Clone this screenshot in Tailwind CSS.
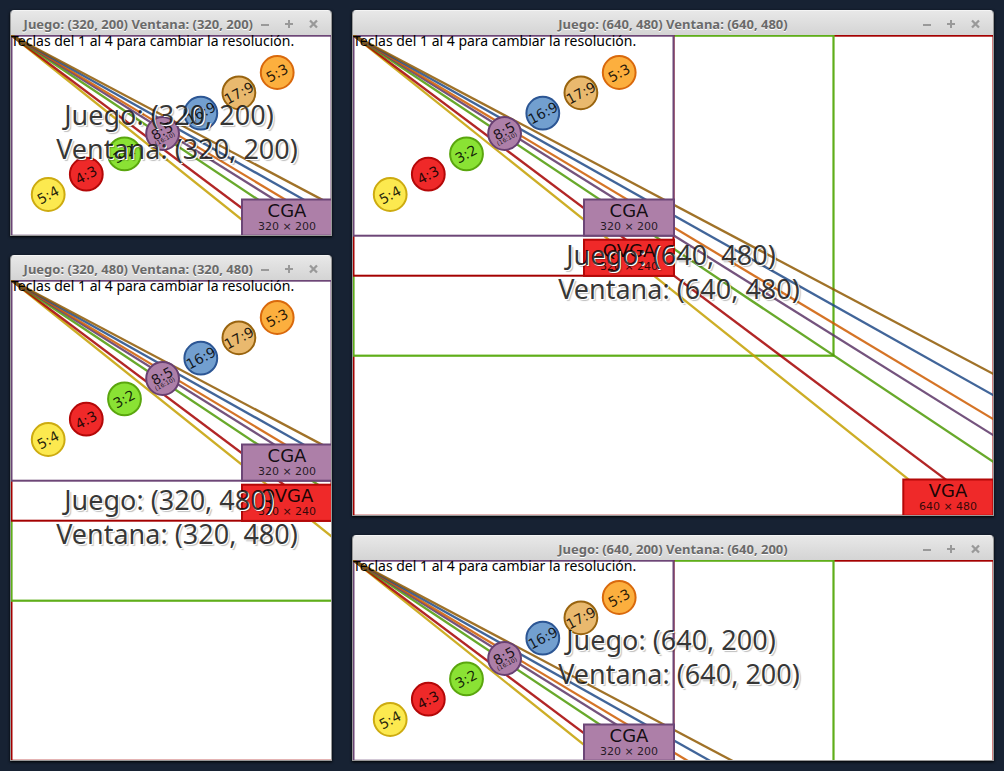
<!DOCTYPE html>
<html lang="es">
<head>
<meta charset="utf-8">
<meta name="viewport" content="width=device-width, initial-scale=1">
<title>Resoluciones</title>
<script src="https://cdn.jsdelivr.net/npm/@tailwindcss/browser@4"></script>
</head>
<body class="min-h-screen bg-[#172233] font-['Noto_Sans',sans-serif]">

<!-- Shared drawing: resolution frames and aspect-ratio lines, shown by every window -->
<svg class="absolute size-0" aria-hidden="true">
  <defs>
    <g id="scene" font-family="DejaVu Sans, sans-serif" text-anchor="middle" fill="none">
      <rect x="0.5" y="0.7" width="640" height="480" stroke="#a40000" stroke-width="2"/>
      <rect x="0.5" y="0.7" width="480" height="320" fill="#fff" stroke="#5fae1a" stroke-width="2.2"/>
      <rect x="0.5" y="0.7" width="320" height="240" fill="#fff" stroke="#a40000" stroke-width="2"/>
      <rect x="0.5" y="0.7" width="320" height="200" fill="#fff" stroke="#6d4677" stroke-width="2"/>
      <g stroke-width="2.3" stroke-opacity="0.85">
        <path d="M0 0L800 640" stroke="#c4a000"/>
        <path d="M0 0L800 600" stroke="#a40000"/>
        <path d="M0 0L900 600" stroke="#4e9a06"/>
        <path d="M0 0L800 500" stroke="#5c3566"/>
        <path d="M0 0L800 480" stroke="#ce5c00"/>
        <path d="M0 0L800 450" stroke="#204a87"/>
        <path d="M0 0L850 450" stroke="#8f5902"/>
      </g>
      <g stroke-width="2">
        <rect x="231" y="164.5" width="90" height="36.2" fill="#ad7fa8" stroke="#6d4677"/>
        <rect x="231" y="204.7" width="90" height="36.2" fill="#ef2929" stroke="#b40808"/>
        <rect x="550.3" y="444.5" width="90" height="36.2" fill="#ef2929" stroke="#b40808"/>
      </g>
      <g fill="#000" fill-opacity="0.9" font-size="18">
        <text x="276" y="182">CGA</text>
        <text x="276" y="222">QVGA</text>
        <text x="595" y="462">VGA</text>
      </g>
      <g fill="#000" fill-opacity="0.8" font-size="11">
        <text x="276" y="195">320 × 200</text>
        <text x="276" y="235">320 × 240</text>
        <text x="595" y="475">640 × 480</text>
      </g>
      <g stroke-width="2">
        <circle cx="37.2" cy="159.5" r="16.4" fill="#fce94f" stroke="#cdab10"/>
        <circle cx="75.3" cy="139.2" r="16.4" fill="#ef2929" stroke="#b40808"/>
        <circle cx="113.5" cy="118.9" r="16.4" fill="#8ae234" stroke="#5aa60e"/>
        <circle cx="151.6" cy="98.5" r="16.4" fill="#ad7fa8" stroke="#684072"/>
        <circle cx="189.8" cy="78.2" r="16.4" fill="#729fcf" stroke="#2c5694"/>
        <circle cx="227.9" cy="57.8" r="16.4" fill="#e9b96e" stroke="#99640f"/>
        <circle cx="266.2" cy="37.5" r="16.4" fill="#fcaf3e" stroke="#d9690c"/>
      </g>
      <g fill="#000" fill-opacity="0.85" font-size="14">
        <text transform="translate(37 160) rotate(-28)" y="5">5:4</text>
        <text transform="translate(75 140) rotate(-28)" y="5">4:3</text>
        <text transform="translate(113 119) rotate(-28)" y="5">3:2</text>
        <text transform="translate(151 96) rotate(-28)" y="5">8:5</text>
        <text transform="translate(190 78) rotate(-28)" y="5">16:9</text>
        <text transform="translate(228 58) rotate(-28)" y="5">17:9</text>
        <text transform="translate(266 38) rotate(-28)" y="5">5:3</text>
        <text transform="translate(154 104) rotate(-28)" y="2" font-size="6">(16:10)</text>
      </g>
    </g>
    <g id="minimize"><path d="M4 8h8v2H4z"/></g>
    <g id="maximize"><path d="M4 7h3V4h2v3h3v2H9v3H7V9H4z"/></g>
    <g id="close"><path d="M5 4.500L12 11.500M12 4.500L5 11.500" stroke="#999" stroke-width="2.300"/></g>
  </defs>
</svg>

<main class="grid grid-cols-[322fr_642fr] items-start gap-5 p-[10px]">
  <div class="flex min-w-0 flex-col gap-[19px]">

    <section class="overflow-hidden rounded-t border border-t-0 border-[#999] shadow-[0_1px_3px_#000]">
      <header class="grid h-[25px] grid-cols-[minmax(0,1fr)_auto_1fr] items-center border-t border-[#f4f4f4] bg-linear-to-b from-[#e8e8e8] to-[#d4d4d4] pt-px">
        <h2 class="col-start-2 whitespace-nowrap text-[13px] leading-6 font-bold text-[#6a6a6a] text-shadow-[0_1px_0_#fff]">Juego: (320, 200) Ventana: (320, 200)</h2>
        <div class="flex justify-end pr-[6px]">
          <button class="grid h-6 w-6 place-items-center" aria-label="Minimizar"><svg class="size-4 fill-[#999]" viewBox="0 0 16 16"><use href="#minimize"/></svg></button>
          <button class="grid h-6 w-6 place-items-center" aria-label="Maximizar"><svg class="size-4 fill-[#999]" viewBox="0 0 16 16"><use href="#maximize"/></svg></button>
          <button class="grid h-6 w-6 place-items-center" aria-label="Cerrar"><svg class="size-4 fill-[#999]" viewBox="0 0 16 16"><use href="#close"/></svg></button>
        </div>
      </header>
      <div class="relative h-[200px] overflow-hidden bg-white">
        <svg class="absolute inset-0 size-full"><use href="#scene"/></svg>
        <p class="absolute top-0 left-0 whitespace-nowrap text-[14px] leading-3 text-black">Teclas del 1 al 4 para cambiar la resolución.</p>
        <div class="absolute inset-0 grid place-content-center pb-1.5 pl-3 whitespace-nowrap text-[27px] leading-[34px] text-black/80 text-shadow-[1px_1px_0_#fff,2px_2px_1px_#00000040]">
          <p class="pl-2">Juego: (320, 200)</p>
          <p>Ventana: (320, 200)</p>
        </div>
      </div>
    </section>

    <section class="overflow-hidden rounded-t border border-t-0 border-[#999] shadow-[0_1px_3px_#000]">
      <header class="grid h-[25px] grid-cols-[minmax(0,1fr)_auto_1fr] items-center border-t border-[#f4f4f4] bg-linear-to-b from-[#e8e8e8] to-[#d4d4d4] pt-px">
        <h2 class="col-start-2 whitespace-nowrap text-[13px] leading-6 font-bold text-[#6a6a6a] text-shadow-[0_1px_0_#fff]">Juego: (320, 480) Ventana: (320, 480)</h2>
        <div class="flex justify-end pr-[6px]">
          <button class="grid h-6 w-6 place-items-center" aria-label="Minimizar"><svg class="size-4 fill-[#999]" viewBox="0 0 16 16"><use href="#minimize"/></svg></button>
          <button class="grid h-6 w-6 place-items-center" aria-label="Maximizar"><svg class="size-4 fill-[#999]" viewBox="0 0 16 16"><use href="#maximize"/></svg></button>
          <button class="grid h-6 w-6 place-items-center" aria-label="Cerrar"><svg class="size-4 fill-[#999]" viewBox="0 0 16 16"><use href="#close"/></svg></button>
        </div>
      </header>
      <div class="relative h-[480px] overflow-hidden bg-white">
        <svg class="absolute inset-0 size-full"><use href="#scene"/></svg>
        <p class="absolute top-0 left-0 whitespace-nowrap text-[14px] leading-3 text-black">Teclas del 1 al 4 para cambiar la resolución.</p>
        <div class="absolute inset-0 grid place-content-center pb-1.5 pl-3 whitespace-nowrap text-[27px] leading-[34px] text-black/80 text-shadow-[1px_1px_0_#fff,2px_2px_1px_#00000040]">
          <p class="pl-2">Juego: (320, 480)</p>
          <p>Ventana: (320, 480)</p>
        </div>
      </div>
    </section>
  </div>

  <div class="flex min-w-0 flex-col gap-[19px]">

    <section class="overflow-hidden rounded-t border border-t-0 border-[#999] shadow-[0_1px_3px_#000]">
      <header class="grid h-[25px] grid-cols-[minmax(0,1fr)_auto_1fr] items-center border-t border-[#f4f4f4] bg-linear-to-b from-[#e8e8e8] to-[#d4d4d4] pt-px">
        <h2 class="col-start-2 whitespace-nowrap text-[13px] leading-6 font-bold text-[#6a6a6a] text-shadow-[0_1px_0_#fff]">Juego: (640, 480) Ventana: (640, 480)</h2>
        <div class="flex justify-end pr-[6px]">
          <button class="grid h-6 w-6 place-items-center" aria-label="Minimizar"><svg class="size-4 fill-[#999]" viewBox="0 0 16 16"><use href="#minimize"/></svg></button>
          <button class="grid h-6 w-6 place-items-center" aria-label="Maximizar"><svg class="size-4 fill-[#999]" viewBox="0 0 16 16"><use href="#maximize"/></svg></button>
          <button class="grid h-6 w-6 place-items-center" aria-label="Cerrar"><svg class="size-4 fill-[#999]" viewBox="0 0 16 16"><use href="#close"/></svg></button>
        </div>
      </header>
      <div class="relative h-[480px] overflow-hidden bg-white">
        <svg class="absolute inset-0 size-full"><use href="#scene"/></svg>
        <p class="absolute top-0 left-0 whitespace-nowrap text-[14px] leading-3 text-black">Teclas del 1 al 4 para cambiar la resolución.</p>
        <div class="absolute inset-0 grid place-content-center pb-1.5 pl-3 whitespace-nowrap text-[27px] leading-[34px] text-black/80 text-shadow-[1px_1px_0_#fff,2px_2px_1px_#00000040]">
          <p class="pl-2">Juego: (640, 480)</p>
          <p>Ventana: (640, 480)</p>
        </div>
      </div>
    </section>

    <section class="overflow-hidden rounded-t border border-t-0 border-[#999] shadow-[0_1px_3px_#000]">
      <header class="grid h-[25px] grid-cols-[minmax(0,1fr)_auto_1fr] items-center border-t border-[#f4f4f4] bg-linear-to-b from-[#e8e8e8] to-[#d4d4d4] pt-px">
        <h2 class="col-start-2 whitespace-nowrap text-[13px] leading-6 font-bold text-[#6a6a6a] text-shadow-[0_1px_0_#fff]">Juego: (640, 200) Ventana: (640, 200)</h2>
        <div class="flex justify-end pr-[6px]">
          <button class="grid h-6 w-6 place-items-center" aria-label="Minimizar"><svg class="size-4 fill-[#999]" viewBox="0 0 16 16"><use href="#minimize"/></svg></button>
          <button class="grid h-6 w-6 place-items-center" aria-label="Maximizar"><svg class="size-4 fill-[#999]" viewBox="0 0 16 16"><use href="#maximize"/></svg></button>
          <button class="grid h-6 w-6 place-items-center" aria-label="Cerrar"><svg class="size-4 fill-[#999]" viewBox="0 0 16 16"><use href="#close"/></svg></button>
        </div>
      </header>
      <div class="relative h-[200px] overflow-hidden bg-white">
        <svg class="absolute inset-0 size-full"><use href="#scene"/></svg>
        <p class="absolute top-0 left-0 whitespace-nowrap text-[14px] leading-3 text-black">Teclas del 1 al 4 para cambiar la resolución.</p>
        <div class="absolute inset-0 grid place-content-center pb-1.5 pl-3 whitespace-nowrap text-[27px] leading-[34px] text-black/80 text-shadow-[1px_1px_0_#fff,2px_2px_1px_#00000040]">
          <p class="pl-2">Juego: (640, 200)</p>
          <p>Ventana: (640, 200)</p>
        </div>
      </div>
    </section>
  </div>
</main>
</body>
</html>
